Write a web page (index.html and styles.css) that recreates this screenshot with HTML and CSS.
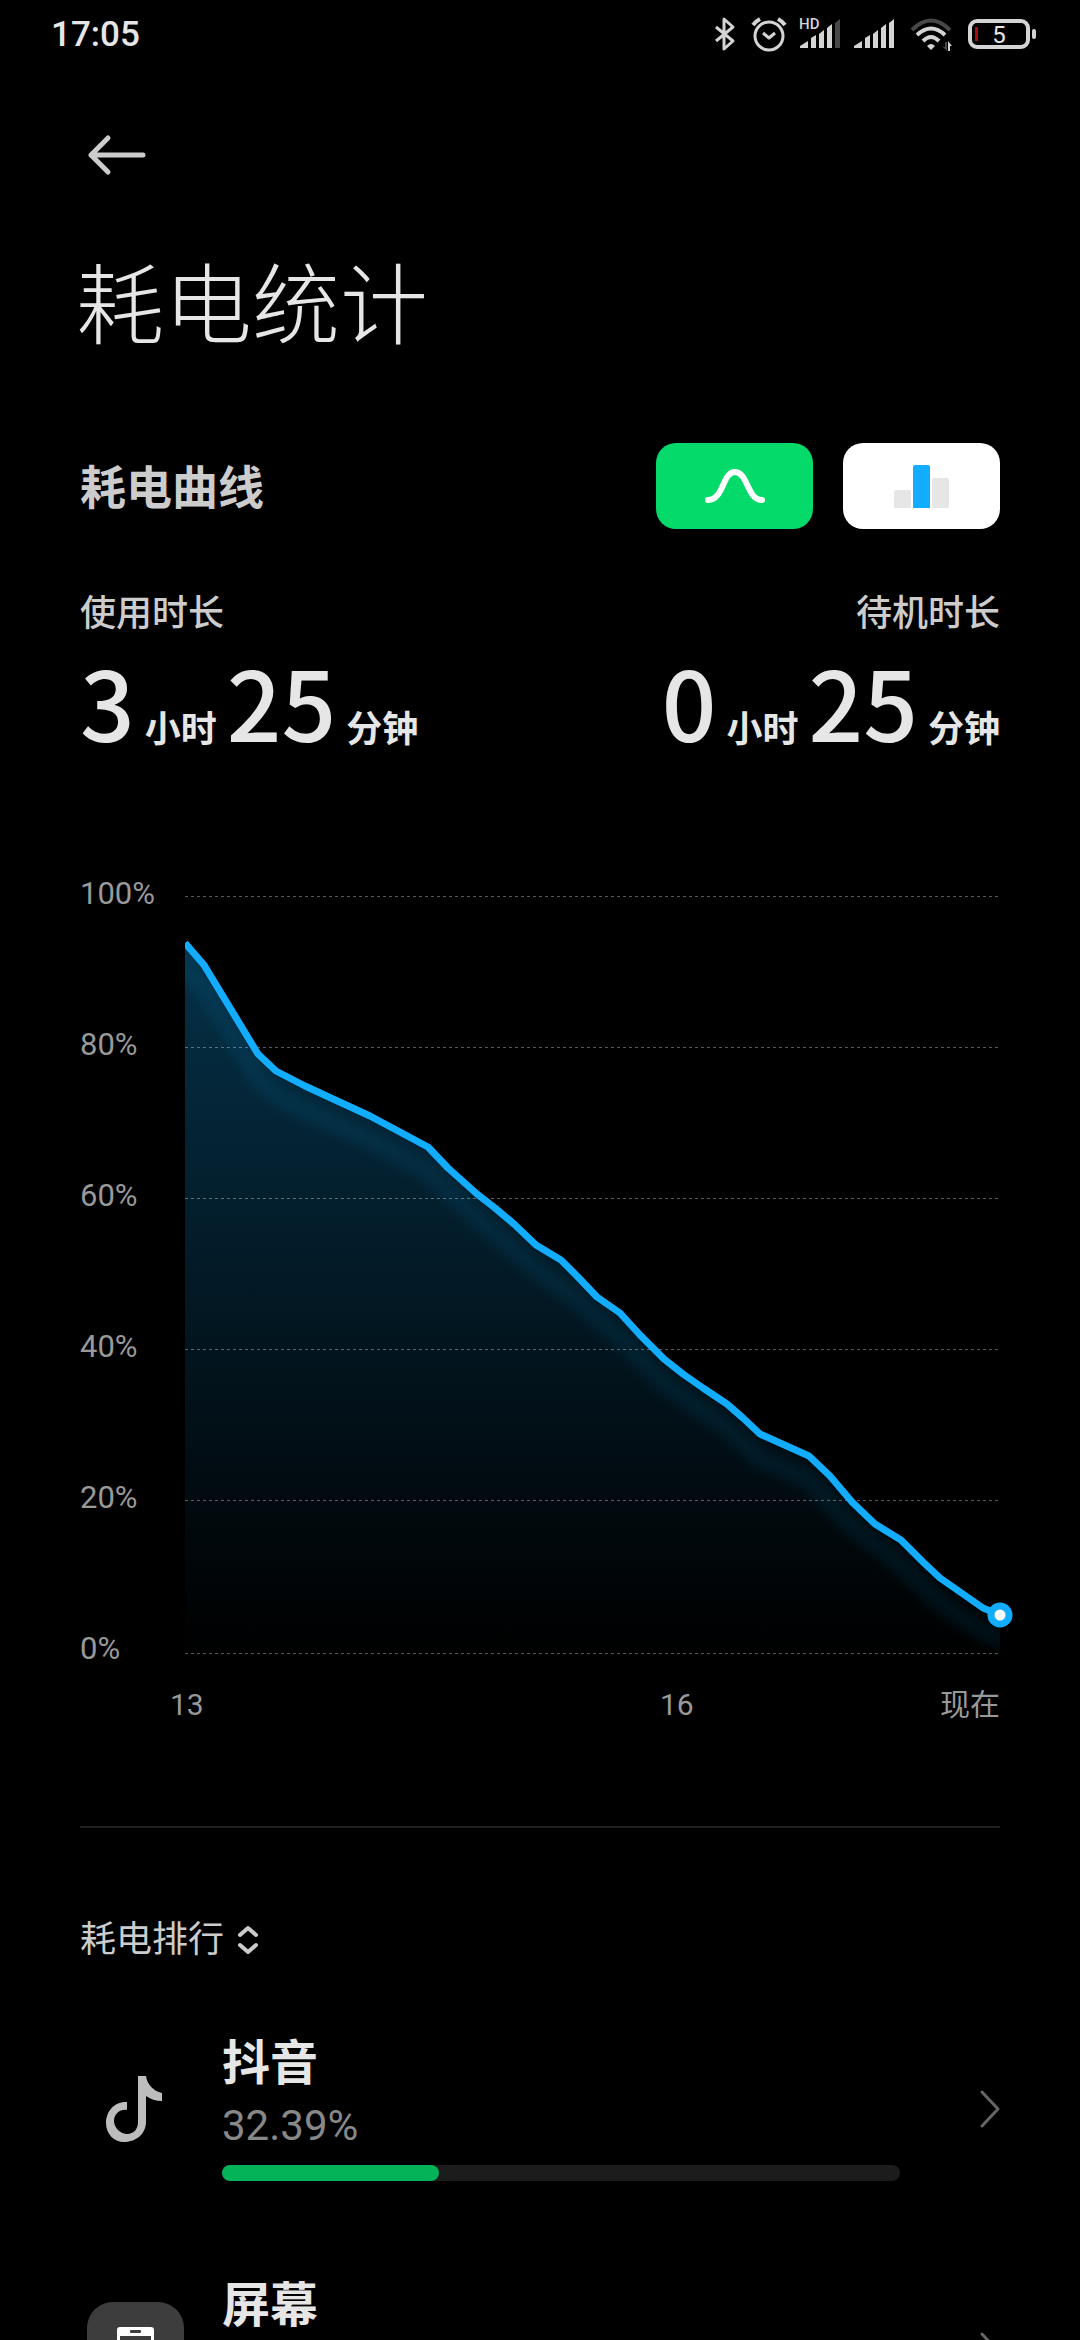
FILE: index.html
```html
<!DOCTYPE html>
<html lang="zh-CN">
  <head>
    <meta charset="UTF-8" />
    <meta name="viewport" content="width=device-width, initial-scale=1.0" />
    <title>耗电统计</title>
    <link rel="stylesheet" href="styles.css" />
  </head>
  <body>
    <div class="screen">
      <div class="status-bar">
        <span class="clock">17:05</span>
        <div class="status-icons">
          <!-- bluetooth -->
          <svg width="26" height="34" viewBox="0 0 26 34">
            <path d="M3 10 L20 24 L11 32 V2 L20 10 L3 24" class="line" stroke-width="3" />
          </svg>
          <!-- alarm -->
          <svg width="36" height="34" viewBox="0 0 36 34">
            <circle cx="18" cy="19" r="14" class="line" stroke-width="3" />
            <path d="M12 16 L18 21 L24 16" class="line" stroke-width="3" />
            <path d="M2 8 Q5 4 9 2 M27 2 Q31 4 34 8" class="line" stroke-width="4" />
          </svg>
          <!-- sim 1 -->
          <svg width="42" height="34" viewBox="0 0 42 34">
            <text x="0" y="12" class="hd">HD</text>
            <path d="M1 31 V29 L9 24 V31 Z M12 31 V21 L17 18 V31 Z M20 31 V17 L25 13 V31 Z M28 31 V11 L33 7 V31 Z" class="solid" />
            <path d="M36 31 V6 L41 2 V31 Z" class="dim" />
          </svg>
          <!-- sim 2 -->
          <svg width="44" height="34" viewBox="0 0 44 34">
            <path d="M1 31 V29 L9 24 V31 Z M12 31 V21 L17 18 V31 Z M20 31 V17 L25 13 V31 Z M28 31 V11 L33 7 V31 Z M36 31 V6 L41 2 V31 Z" class="solid" />
          </svg>
          <!-- wifi -->
          <svg width="46" height="34" viewBox="0 0 46 34">
            <path d="M3 13 Q22 -6 41 13" class="line dim-line" stroke-width="4" />
            <path d="M8 18 Q22 5 36 18" class="line" stroke-width="4" />
            <path d="M14 24 Q22 16 30 24" class="line" stroke-width="4" />
            <path d="M18 29 Q22 25 26 29 L22 33 Z" class="solid" />
            <path d="M33 29 L38 34 V25 H36 V30 Z" class="dim" />
            <path d="M39 34 V24 L43 29 H41 V34 Z" class="solid" />
          </svg>
          <!-- battery -->
          <svg width="69" height="34" viewBox="0 0 69 34">
            <rect x="3" y="4" width="58" height="26" rx="7" class="line" stroke-width="4" />
            <rect x="65" y="12" width="4" height="10" rx="2" class="solid" />
            <rect x="8" y="10" width="3" height="14" class="low" />
            <text x="32" y="26" class="level">5</text>
          </svg>
        </div>
      </div>

      <main class="content">
        <button type="button" class="back-button" aria-label="返回">
          <svg width="58" height="40" viewBox="0 0 58 40">
            <path d="M20 3 L3 20 L20 37 M3 20 H55" class="back-line" />
          </svg>
        </button>
        <h1>耗电统计</h1>

        <div class="section-head">
          <h2>耗电曲线</h2>
          <div class="tabs">
            <button type="button" class="tab active" aria-label="曲线">
              <svg width="60" height="36" viewBox="0 0 60 36">
                <path d="M3 32 C19 32 17 4 30 4 C43 4 42 32 57 32" class="curve-icon" />
              </svg>
            </button>
            <button type="button" class="tab" aria-label="柱状图">
              <svg width="56" height="44" viewBox="0 0 56 44">
                <path d="M0 44 V28 Q0 26 2 26 H15 Q17 26 17 28 V44 Z" fill="#e6e6e6" />
                <path d="M19 44 V3 Q19 1 21 1 H34 Q36 1 36 3 V44 Z" fill="#12adff" />
                <path d="M38 44 V16 Q38 14 40 14 H53 Q55 14 55 16 V44 Z" fill="#e6e6e6" />
              </svg>
            </button>
          </div>
        </div>

        <div class="stats">
          <div class="stat">
            <div class="stat-label">使用时长</div>
            <div class="stat-value">
              <span class="number">3</span><span class="unit">小时</span>
              <span class="number">25</span><span class="unit">分钟</span>
            </div>
          </div>
          <div class="stat">
            <div class="stat-label right">待机时长</div>
            <div class="stat-value">
              <span class="number">0</span><span class="unit">小时</span>
              <span class="number">25</span><span class="unit">分钟</span>
            </div>
          </div>
        </div>

        <div class="chart">
          <div class="y-axis">
            <span>100%</span>
            <span>80%</span>
            <span>60%</span>
            <span>40%</span>
            <span>20%</span>
            <span>0%</span>
          </div>
          <svg class="plot" viewBox="0 0 815 785">
            <defs>
              <linearGradient id="areaFill" x1="0" y1="63" x2="0" y2="775" gradientUnits="userSpaceOnUse">
                <stop offset="0" stop-color="#12adff" stop-opacity="0.28" />
                <stop offset="1" stop-color="#12adff" stop-opacity="0" />
              </linearGradient>
              <filter id="soft" x="-10%" y="-10%" width="120%" height="120%">
                <feGaussianBlur stdDeviation="5" />
              </filter>
              <clipPath id="plotArea">
                <rect x="0" y="0" width="815" height="785" />
              </clipPath>
            </defs>
            <path
              d="M0 65 L19 86 L73 175 L91 192 L120 207 L185 237 L243 268 L263 289 L292 315 L310 329 L329 345 L351 366 L376 381 L391 396 L412 418 L435 434 L455 456 L479 480 L498 495 L518 509 L542 525 L558 539 L575 555 L624 577 L645 597 L667 623 L690 645 L716 661 L738 683 L755 699 L778 715 L798 729 L815 736 V775 H0 Z"
              fill="url(#areaFill)"
            />
            <g clip-path="url(#plotArea)">
              <path
                d="M-14 70 L19 109 L73 199 L91 216 L120 231 L185 261 L243 292 L292 339 L351 390 L391 420 L435 458 L479 504 L542 549 L575 579 L624 601 L667 647 L716 685 L755 723 L798 753 L830 764"
                class="glow"
                filter="url(#soft)"
              />
            </g>
            <path
              d="M0 17 H815 M0 168 H815 M0 319 H815 M0 470 H815 M0 621 H815 M0 774 H815"
              class="grid-lines"
              transform="translate(0 0.5)"
            />
            <g clip-path="url(#plotArea)">
              <path
                d="M0 64 L19 86 L73 175 L91 192 L120 207 L185 237 L243 268 L263 289 L292 315 L310 329 L329 345 L351 366 L376 381 L391 396 L412 418 L435 434 L455 456 L479 480 L498 495 L518 509 L542 525 L558 539 L575 555 L624 577 L645 597 L667 623 L690 645 L716 661 L738 683 L755 699 L778 715 L798 729 L815 736"
                class="battery-line"
              />
            </g>
            <circle cx="815" cy="736" r="9" class="now-dot" />
          </svg>
        </div>
        <div class="x-axis">
          <span>13</span>
          <div class="x-axis-end">
            <span>16</span>
            <span>现在</span>
          </div>
        </div>

        <hr class="divider" />

        <button type="button" class="sort-button">
          耗电排行
          <svg width="20" height="30" viewBox="0 0 20 30">
            <path d="M2 10 L10 3 L18 10 M2 20 L10 27 L18 20" class="sort-line" />
          </svg>
        </button>

        <ul class="ranking">
          <li>
            <a href="#" class="app-row">
              <div class="app-icon">
                <svg width="60" height="66" viewBox="0 0 60 66">
                  <path d="M32 0 H40 C41 8 47 15 56 17 V25 C50 25 44 23 40 20 V46 C40 57 31 66 18 66 C8 66 0 58 0 47 C0 35 9 25 21 26 V34 C14 33 8 38 8 45 C8 52 15 58 21 58 C28 58 32 53 32 46 Z" fill="#bdbdbd" />
                </svg>
              </div>
              <div class="app-info">
                <div class="app-name">抖音</div>
                <div class="app-percent">32.39%</div>
                <div class="bar"><div class="bar-fill" style="width: 32%"></div></div>
              </div>
              <svg class="chevron" width="20" height="38" viewBox="0 0 20 38">
                <path d="M2 2 L18 19 L2 36" class="chevron-line" />
              </svg>
            </a>
          </li>
          <li>
            <a href="#" class="app-row">
              <div class="app-icon tile">
                <svg width="37" height="48" viewBox="0 0 37 48">
                  <rect width="37" height="48" rx="3" fill="#fff" />
                  <rect x="13" y="3" width="11" height="3" rx="1" fill="#3d3d3d" />
                  <rect x="3" y="9" width="31" height="31" fill="#3d3d3d" />
                </svg>
              </div>
              <div class="app-info">
                <div class="app-name">屏幕</div>
              </div>
              <svg class="chevron" width="20" height="38" viewBox="0 0 20 38">
                <path d="M2 2 L18 19 L2 36" class="chevron-line" />
              </svg>
            </a>
          </li>
        </ul>
      </main>
    </div>
  </body>
</html>
```
FILE: styles.css
```css
* {
  box-sizing: border-box;
}
body {
  margin: 0;
  background-color: #000;
  color: #e6e6e6;
  font-family: Roboto, "Noto Sans CJK SC", sans-serif;
}
svg {
  display: block;
  fill: none;
  overflow: visible;
}
button {
  padding: 0;
  border: none;
  background: none;
  color: inherit;
  font-family: inherit;
  cursor: pointer;
}
.screen {
  height: 100vh;
  overflow-y: auto;
  scrollbar-width: none;
}

/* status bar */
.status-bar {
  display: flex;
  justify-content: space-between;
  align-items: center;
  height: 68px;
  padding: 0 44px 0 51px;
}
.clock {
  font-size: 35px;
  font-weight: 500;
}
.status-icons {
  display: flex;
  gap: 12px;
}
.line {
  stroke: #d4d4d4;
  stroke-linejoin: round;
}
.dim-line {
  stroke: #484848;
}
.solid {
  fill: #d4d4d4;
}
.dim {
  fill: #484848;
}
.low {
  fill: #a80c0c;
}
.hd {
  fill: #d4d4d4;
  font-size: 15px;
  font-weight: 500;
}
.level {
  fill: #e6e6e6;
  font-size: 24px;
  text-anchor: middle;
}

/* header */
.content {
  padding: 67px 80px 0;
}
.back-button {
  display: block;
  margin-left: 8px;
}
.back-line {
  stroke: #ccc;
  stroke-width: 5px;
  stroke-linecap: round;
  stroke-linejoin: round;
}
h1 {
  margin: 82px 0 86px -4px;
  font-size: 88px;
  font-weight: 300;
  line-height: 100px;
}
.section-head {
  display: flex;
  justify-content: space-between;
  align-items: center;
}
h2 {
  margin: 0;
  padding-top: 4px;
  color: #ccc;
  font-size: 46px;
  font-weight: 700;
  line-height: 60px;
}
.tabs {
  display: flex;
  gap: 30px;
}
.tab {
  display: flex;
  justify-content: center;
  align-items: center;
  width: 157px;
  height: 86px;
  border-radius: 20px;
  background-color: #fff;
}
.tab.active {
  background-color: #04da6a;
}
.curve-icon {
  stroke: #fff;
  stroke-width: 6px;
  stroke-linecap: round;
}

/* usage time */
.stats {
  display: flex;
  justify-content: space-between;
  margin-top: 65px;
}
.stat-label {
  color: #ccc;
  font-size: 36px;
  font-weight: 500;
  line-height: 40px;
}
.right {
  text-align: right;
}
.stat-value {
  display: flex;
  align-items: baseline;
  gap: 10px;
  margin-top: 17px;
}
.number {
  font-family: "Noto Sans CJK SC", sans-serif;
  font-size: 96px;
  font-weight: 500;
  line-height: 100px;
}
.unit {
  font-size: 36px;
  font-weight: 700;
  line-height: 40px;
}

/* chart */
.chart {
  display: grid;
  grid-template-columns: 105px 1fr;
  margin-top: 128px;
}
.y-axis {
  display: flex;
  flex-direction: column;
  justify-content: space-between;
  color: #999;
  font-size: 31px;
  line-height: 30px;
}
.plot {
  width: 100%;
}
.glow {
  stroke: #12adff;
  stroke-opacity: 0.08;
  stroke-width: 20px;
}
.grid-lines {
  stroke: #fff;
  stroke-opacity: 0.35;
  stroke-dasharray: 3 3;
}
.battery-line {
  stroke: #12adff;
  stroke-width: 7px;
  stroke-linejoin: round;
}
.now-dot {
  fill: #fff;
  stroke: #12adff;
  stroke-width: 7px;
}
.x-axis {
  display: grid;
  grid-template-columns: 490fr 340fr;
  margin-top: 21px;
  padding-left: 90px;
  color: #999;
  font-size: 30px;
  line-height: 40px;
}
.x-axis-end {
  display: flex;
  justify-content: space-between;
}
.divider {
  height: 2px;
  margin: 101px 0 92px;
  border: none;
  background-color: #1f1f1f;
}

/* ranking */
.sort-button {
  display: flex;
  align-items: center;
  gap: 14px;
  color: #ccc;
  font-size: 36px;
  line-height: 40px;
}
.sort-line {
  stroke: #ccc;
  stroke-width: 4px;
  stroke-linecap: round;
  stroke-linejoin: round;
}
.ranking {
  margin: 72px 0 0;
  padding: 0;
  list-style: none;
}
.app-row {
  display: flex;
  height: 242px;
  color: inherit;
  text-decoration: none;
}
.app-icon {
  display: flex;
  justify-content: center;
  align-items: center;
  width: 97px;
  height: 97px;
  margin: 28px 38px 0 7px;
  border-radius: 26px;
}
.tile {
  background-color: #3d3d3d;
}
.app-info {
  flex: 1;
}
.app-name {
  padding-top: 2px;
  font-size: 48px;
  font-weight: 700;
  line-height: 60px;
}
.app-percent {
  margin-top: 4px;
  color: #888;
  font-size: 42px;
  line-height: 56px;
}
.bar {
  height: 16px;
  margin-top: 11px;
  border-radius: 8px;
  background-color: #1c1c1c;
}
.bar-fill {
  height: 16px;
  border-radius: 8px;
  background-color: #04b358;
}
.chevron {
  margin: 58px 0 0 80px;
}
.chevron-line {
  stroke: #666;
  stroke-width: 3px;
  stroke-linecap: round;
  stroke-linejoin: round;
}
```
